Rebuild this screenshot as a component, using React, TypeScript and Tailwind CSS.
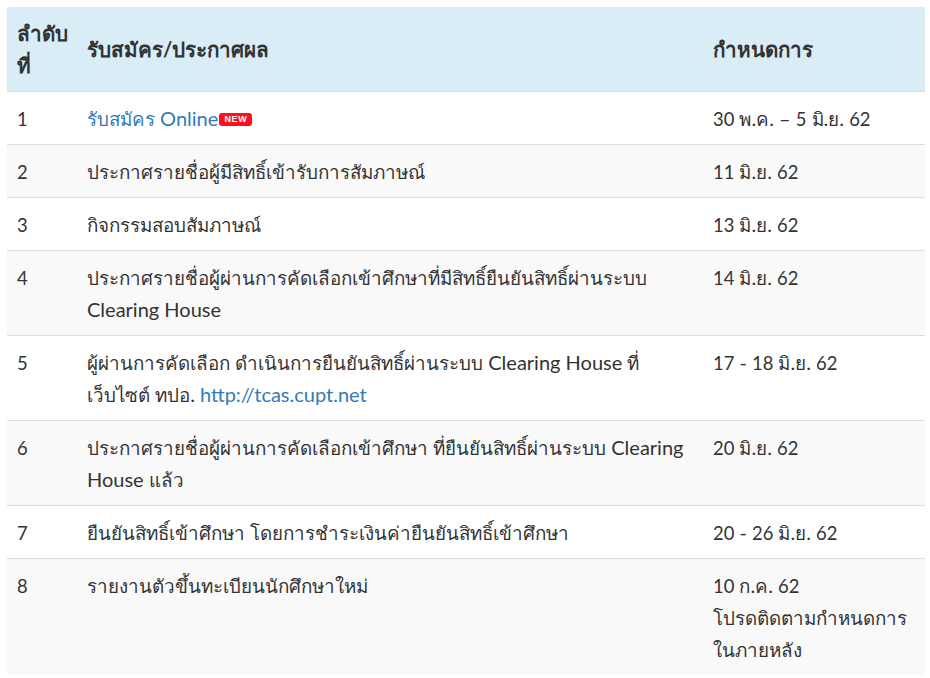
// Thai falls back to another face, which runs a different width from Lato at the same size
function Th({ children, bold }: { children: string; bold?: boolean }) {
  return (
    <>
      {children.split(/([\u0E00-\u0E7F]+|[0-9]+)/).map((part, i) => {
        if (/[0-9]/.test(part)) {
          return (
            <span key={i} className="text-[18.4px] leading-[20px]">
              {part}
            </span>
          );
        }
        if (/[\u0E00-\u0E7F]/.test(part)) {
          return (
            <span key={i} className={bold ? "text-[20.6px] leading-[20px]" : "text-[18.8px] leading-[20px]"}>
              {part}
            </span>
          );
        }
        return part;
      })}
    </>
  );
}

const rows: { n: string; what: React.ReactNode; when: React.ReactNode }[] = [
  {
    n: "1",
    what: (
      <>
        <a className="text-[#337ab7]">
          <Th>รับสมัคร Online</Th>
        </a>
        <span className="relative -top-px ml-[1px] inline-block h-[13px] w-[33px] rounded-[3px] bg-[#fb0f20] text-center align-middle font-['Liberation_Sans',sans-serif] text-[9px] leading-[13px] font-bold tracking-[0.6px] text-white">
          NEW
        </span>
      </>
    ),
    when: <Th>30 พ.ค. – 5 มิ.ย. 62</Th>,
  },
  { n: "2", what: <Th>ประกาศรายชื่อผู้มีสิทธิ์เข้ารับการสัมภาษณ์</Th>, when: <Th>11 มิ.ย. 62</Th> },
  { n: "3", what: <Th>กิจกรรมสอบสัมภาษณ์</Th>, when: <Th>13 มิ.ย. 62</Th> },
  {
    n: "4",
    what: <Th>ประกาศรายชื่อผู้ผ่านการคัดเลือกเข้าศึกษาที่มีสิทธิ์ยืนยันสิทธิ์ผ่านระบบ Clearing House</Th>,
    when: <Th>14 มิ.ย. 62</Th>,
  },
  {
    n: "5",
    what: (
      <>
        <Th>ผู้ผ่านการคัดเลือก ดำเนินการยืนยันสิทธิ์ผ่านระบบ Clearing House ที่เว็บไซต์ ทปอ.</Th>{" "}
        <a className="text-[#337ab7]">http://tcas.cupt.net</a>
      </>
    ),
    when: <Th>17 - 18 มิ.ย. 62</Th>,
  },
  {
    n: "6",
    what: <Th>ประกาศรายชื่อผู้ผ่านการคัดเลือกเข้าศึกษา ที่ยืนยันสิทธิ์ผ่านระบบ Clearing House แล้ว</Th>,
    when: <Th>20 มิ.ย. 62</Th>,
  },
  {
    n: "7",
    what: <Th>ยืนยันสิทธิ์เข้าศึกษา โดยการชำระเงินค่ายืนยันสิทธิ์เข้าศึกษา</Th>,
    when: <Th>20 - 26 มิ.ย. 62</Th>,
  },
  {
    n: "8",
    what: <Th>รายงานตัวขึ้นทะเบียนนักศึกษาใหม่</Th>,
    when: (
      <>
        <Th>10 ก.ค. 62</Th>
        <br />
        <Th>โปรดติดตามกำหนดการในภายหลัง</Th>
      </>
    ),
  },
];

export default function App() {
  return (
    <div className="h-[678px] overflow-hidden bg-white px-[7px] pt-[7px] font-['Lato','Noto_Sans',sans-serif] text-[20px] leading-[32px] text-[#333]">
      <table className="w-[918px] table-fixed border-collapse">
        <thead>
          <tr className="bg-[#d9edf7]">
            <th className="w-[70px] px-[10px] py-[10px] text-left align-middle font-bold">
              <Th bold>ลำดับที่</Th>
            </th>
            <th className="w-[626px] px-[10px] text-left align-middle font-bold">
              <Th bold>รับสมัคร/ประกาศผล</Th>
            </th>
            <th className="px-[10px] text-left align-middle font-bold">
              <Th bold>กำหนดการ</Th>
            </th>
          </tr>
        </thead>
        <tbody>
          {rows.map((r, i) => (
            <tr key={r.n} className={`border-t border-[#ddd] ${i % 2 === 1 ? "bg-[#f9f9f9]" : "bg-white"}`}>
              <td className="p-[10px] align-top">
                <Th>{r.n}</Th>
              </td>
              <td className="p-[10px] align-top">{r.what}</td>
              <td className="p-[10px] align-top">{r.when}</td>
            </tr>
          ))}
        </tbody>
      </table>
    </div>
  );
}
